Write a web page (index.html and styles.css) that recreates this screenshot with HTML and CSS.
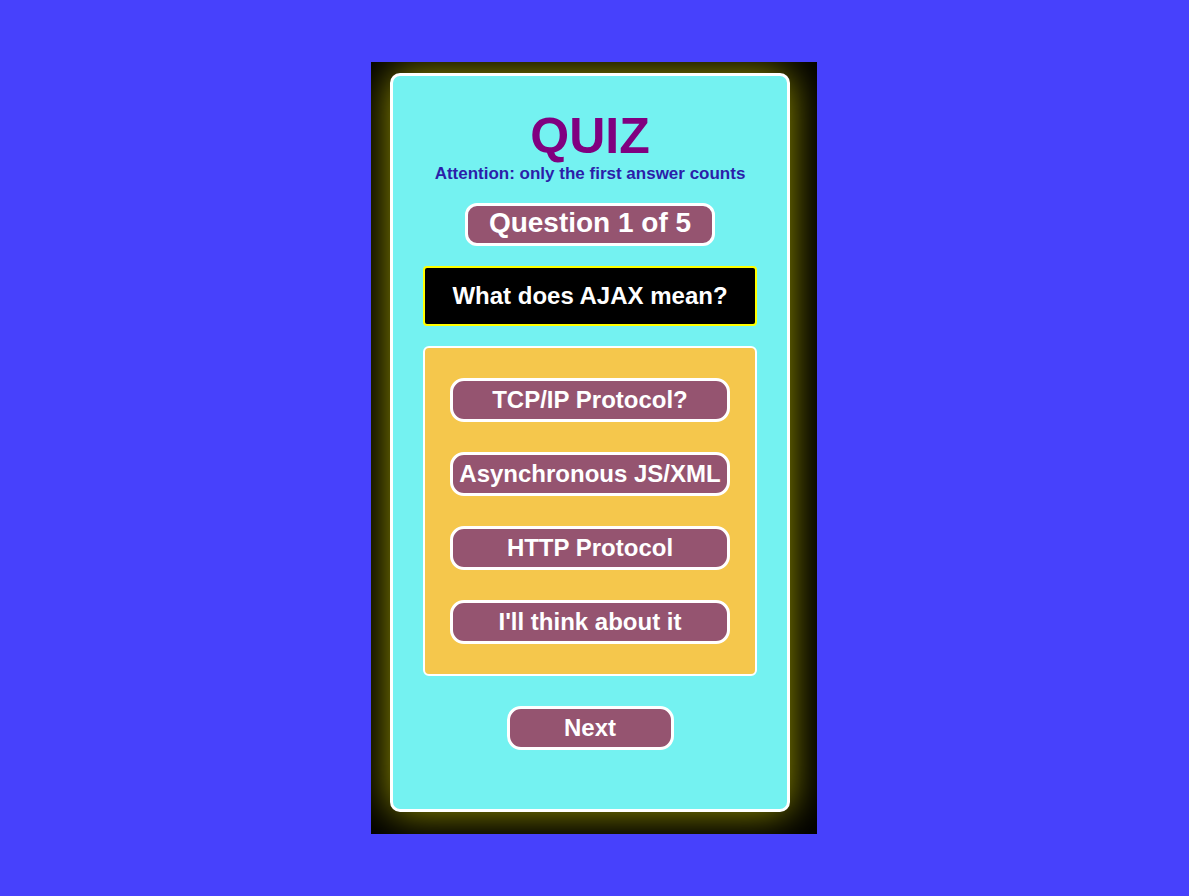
FILE: index.html
```html
<!DOCTYPE html>
<html>
<head>
<meta charset="utf-8">
<link rel="stylesheet" href="styles.css">
</head>
<body>
<div class="stage">
  <div class="frame">
    <div class="card">
      <h1 class="title">QUIZ</h1>
      <p class="subtitle">Attention: only the first answer counts</p>
      <div class="counter">Question 1 of 5</div>
      <div class="question">What does AJAX mean?</div>
      <div class="answers">
        <button class="answer">TCP/IP Protocol?</button>
        <button class="answer">Asynchronous JS/XML</button>
        <button class="answer">HTTP Protocol</button>
        <button class="answer">I'll think about it</button>
      </div>
      <button class="next">Next</button>
    </div>
  </div>
</div>
</body>
</html>
```
FILE: styles.css
```css
html, body {
  margin: 0;
  padding: 0;
}
body {
  background: #4741fc;
  font-family: "Liberation Sans", Arial, sans-serif;
}
.stage {
  min-height: 100vh;
  display: flex;
  align-items: center;
  justify-content: center;
}
.frame {
  background: #000;
  padding: 11px 27px 22px 19px;
  margin-right: 1px;
  overflow: hidden;
}
.card {
  box-sizing: border-box;
  width: 400px;
  height: 739px;
  background: #74f2f1;
  border: 3px solid #fff;
  border-radius: 10px;
  box-shadow: 0 0 40px rgba(255, 250, 0, 0.62);
  display: flex;
  flex-direction: column;
  align-items: center;
}
.title {
  margin: 33px 0 0;
  font-size: 50px;
  line-height: 54px;
  font-weight: bold;
  color: #800080;
}
.subtitle {
  margin: 1px 0 0;
  font-size: 17px;
  line-height: 20px;
  font-weight: bold;
  color: #2b1fa9;
}
.counter {
  margin-top: 19px;
  box-sizing: border-box;
  width: 250px;
  height: 43px;
  padding-bottom: 3px;
  background: #955470;
  border: 3px solid #fff;
  border-radius: 12px;
  color: #fff;
  font-size: 28px;
  font-weight: bold;
  display: flex;
  align-items: center;
  justify-content: center;
}
.question {
  margin-top: 20px;
  box-sizing: border-box;
  width: 334px;
  height: 60px;
  background: #000;
  border: 2px solid #ffff00;
  border-radius: 4px;
  color: #fff;
  font-size: 24px;
  font-weight: bold;
  display: flex;
  align-items: center;
  justify-content: center;
}
.answers {
  margin-top: 20px;
  box-sizing: border-box;
  width: 334px;
  height: 330px;
  background: #f5c74c;
  border: 2px solid #fff;
  border-radius: 6px;
  display: flex;
  flex-direction: column;
  align-items: center;
  padding-top: 30px;
  gap: 30px;
}
.answer, .next {
  box-sizing: border-box;
  height: 44px;
  background: #955470;
  border: 3px solid #fff;
  border-radius: 14px;
  color: #fff;
  font-family: "Liberation Sans", Arial, sans-serif;
  font-size: 24px;
  font-weight: bold;
  padding: 0;
  display: flex;
  align-items: center;
  justify-content: center;
}
.answer {
  width: 280px;
}
.next {
  margin-top: 30px;
  width: 167px;
}
```
